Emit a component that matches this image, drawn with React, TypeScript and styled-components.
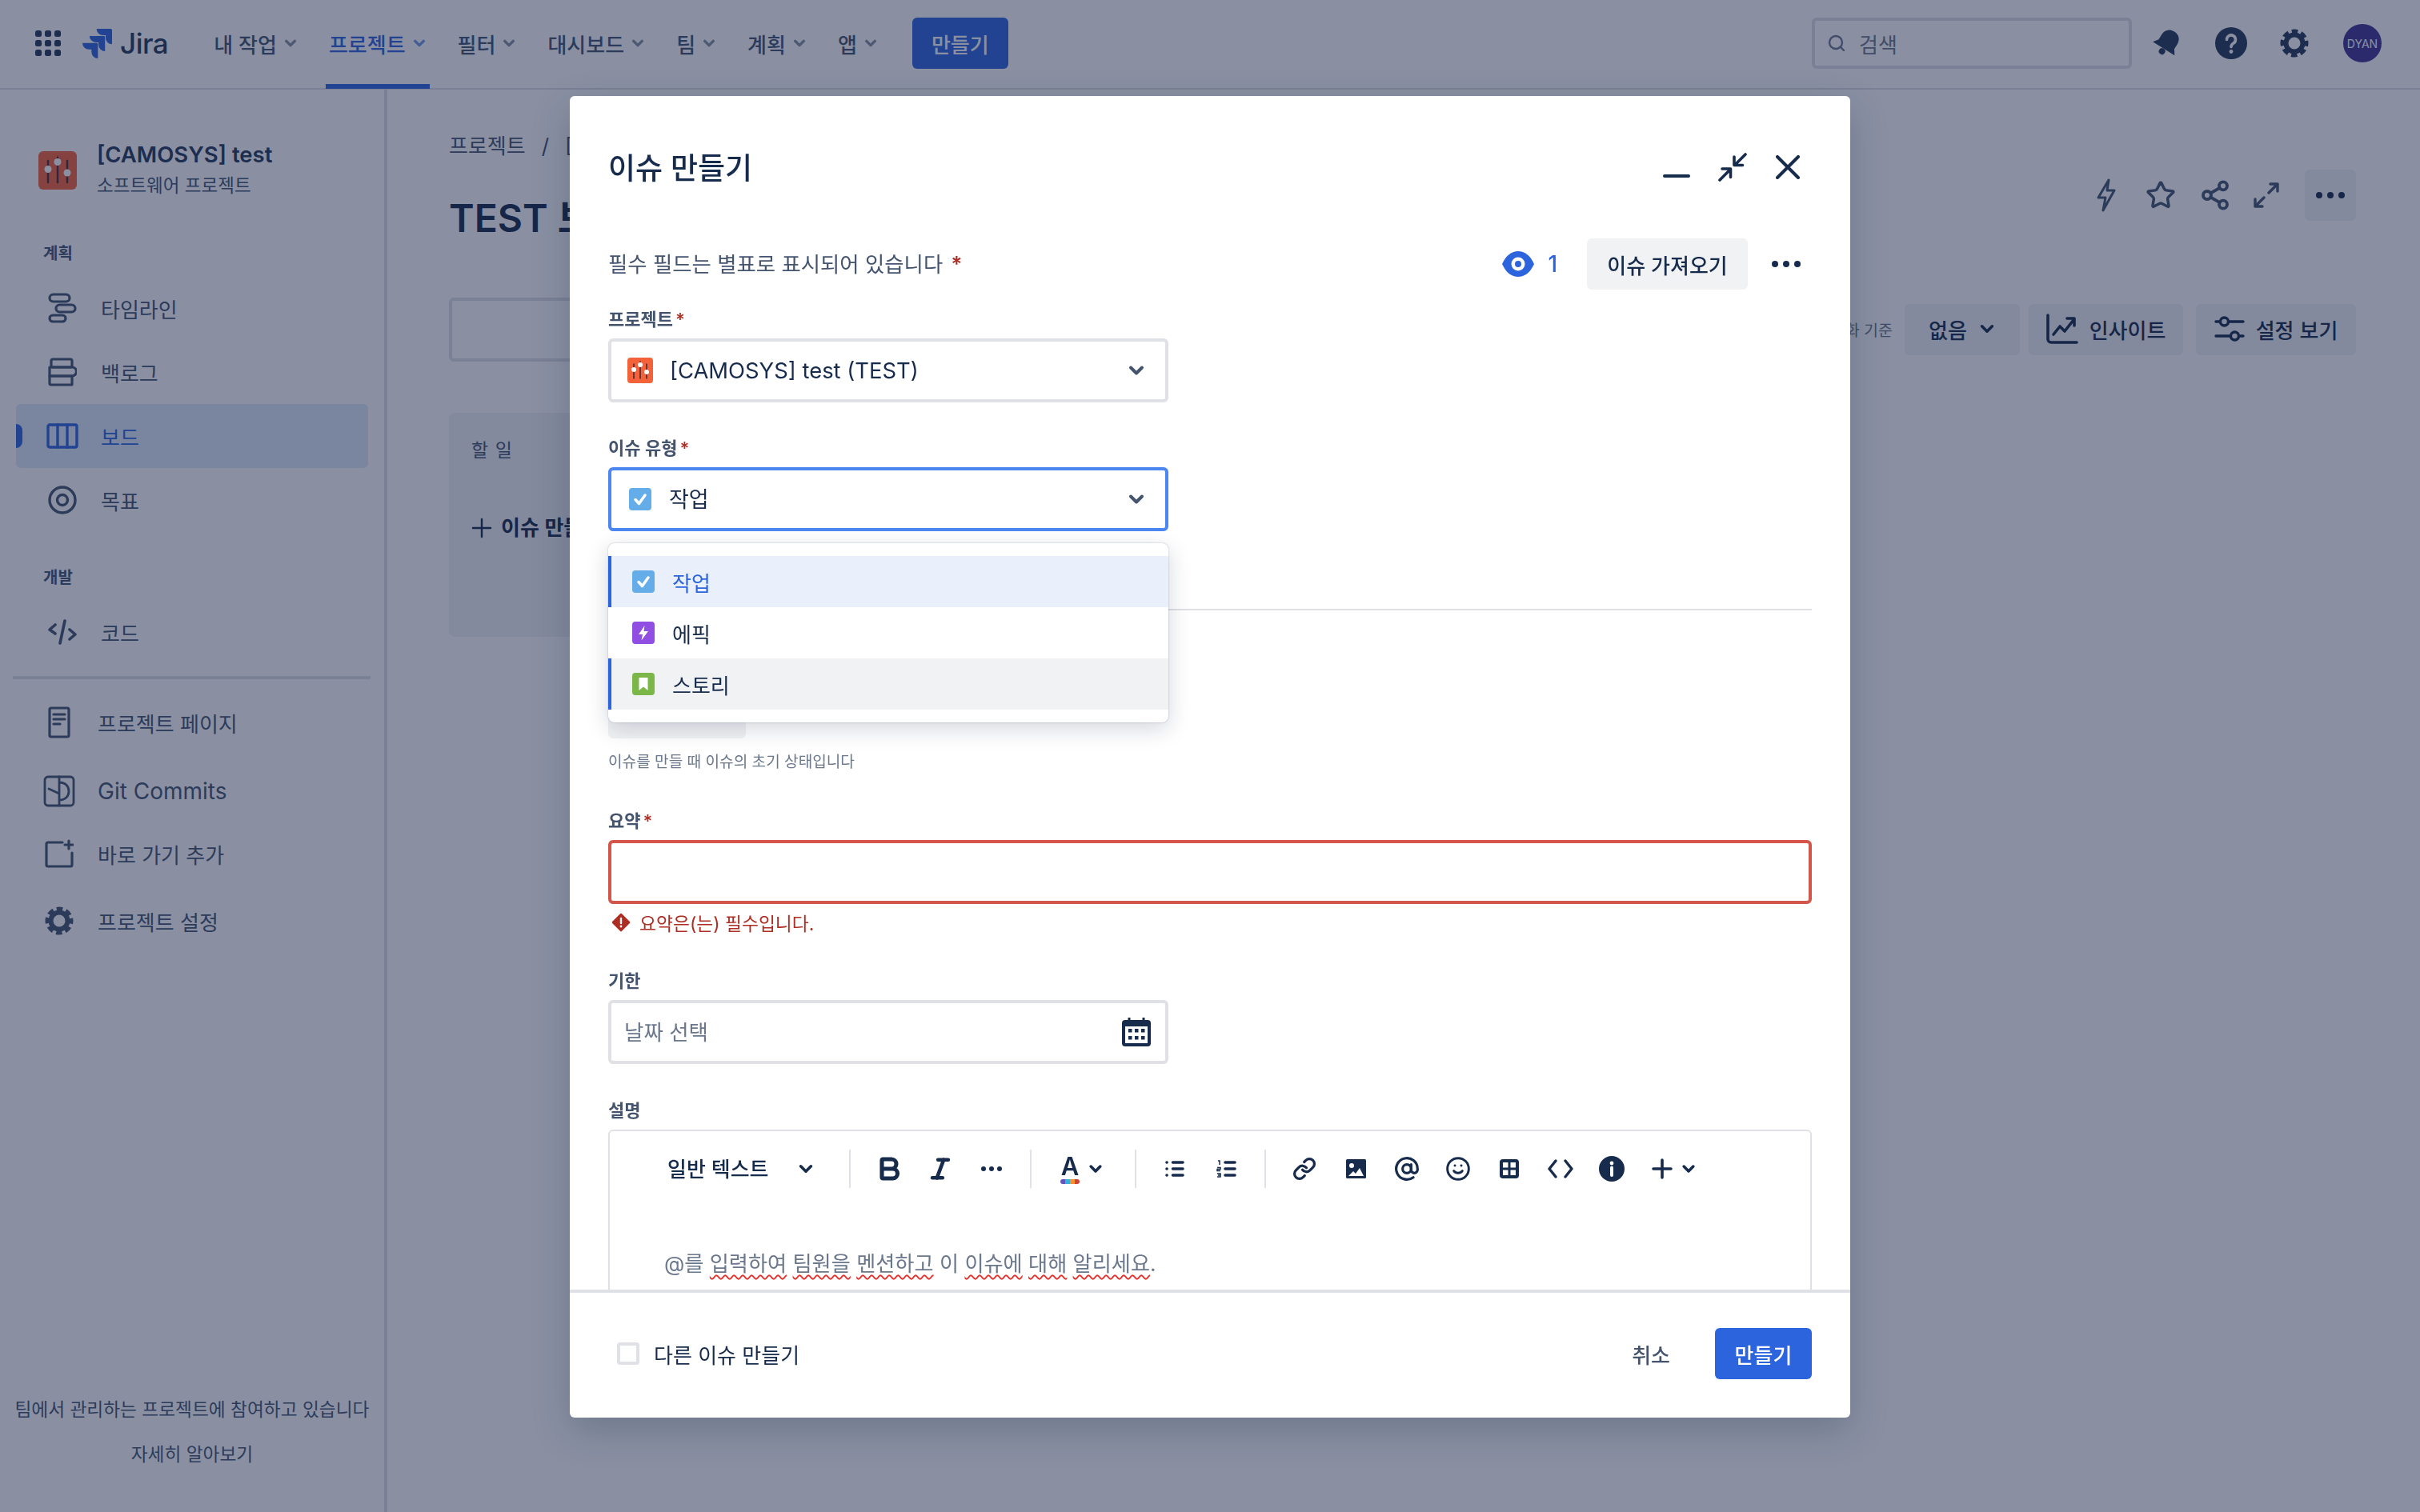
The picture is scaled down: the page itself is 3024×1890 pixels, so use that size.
import React from "react";
import styled, { createGlobalStyle } from "styled-components";
import { AtSign, Bold, Italic, Link, Search, Share2, Smile, Star } from "lucide-react";
import { SiJira } from "react-icons/si";

const Global = createGlobalStyle`
  html, body { margin: 0; padding: 0; background: #fff; }
  * { box-sizing: border-box; }
  body { font-family: Inter, "Noto Sans CJK KR", sans-serif; color: #172b4d; overflow: hidden; }
`;

const Page = styled.div`
  width: 3024px;
  height: 1890px;
  display: flex;
  flex-direction: column;
  overflow: hidden;
`;

/* top navigation */
const TopBar = styled.header`
  height: 112px;
  flex-shrink: 0;
  display: flex;
  align-items: center;
  padding: 0 48px 2px 44px;
  border-bottom: 2px solid #dfe1e6;
`;
const Logo = styled.div`
  display: flex;
  align-items: center;
  gap: 10px;
  margin-left: 27px;
  margin-right: 53px;
  color: #2c64de;
`;
const LogoText = styled.span`
  font-size: 35px;
  font-weight: 500;
  color: #253858;
  letter-spacing: -0.5px;
`;
const NavList = styled.nav`
  display: flex;
  gap: 31px;
  align-self: stretch;
`;
const NavItem = styled.div<{ $active?: boolean }>`
  display: flex;
  align-items: center;
  gap: 8px;
  padding: 3px 4px 0;
  margin-bottom: -3px;
  font-size: 26px;
  font-weight: 500;
  color: ${(p) => (p.$active ? "#2c64de" : "#44546f")};
  border-bottom: 6px solid ${(p) => (p.$active ? "#2c64de" : "transparent")};
`;
const NavChevron = styled.span`
  display: flex;
  opacity: 0.65;
`;
const PrimaryButton = styled.button`
  height: 64px;
  border: 0;
  border-radius: 6px;
  background: #2c64de;
  color: #fff;
  font: 500 26px Inter, "Noto Sans CJK KR", sans-serif;
`;
const TopCreate = styled(PrimaryButton)`
  width: 120px;
  margin-left: 39px;
`;
const TopRight = styled.div`
  margin-left: auto;
  display: flex;
  align-items: center;
`;
const SearchBox = styled.div`
  width: 400px;
  height: 64px;
  border: 4px solid #dfe1e6;
  border-radius: 6px;
  display: flex;
  align-items: center;
  gap: 16px;
  padding-left: 15px;
  font-size: 26px;
  color: #6b778c;
  margin-right: 25px;
`;
const TopIcon = styled.div<{ $w: number }>`
  width: ${(p) => p.$w}px;
  display: flex;
  color: #253858;
`;
const Avatar = styled.div`
  width: 48px;
  height: 48px;
  border-radius: 50%;
  background: #403294;
  color: #fff;
  font-size: 14px;
  display: flex;
  align-items: center;
  justify-content: center;
`;

/* underlying page */
const Body = styled.div`
  flex: 1;
  display: flex;
  min-height: 0;
`;
const Sidebar = styled.aside`
  width: 484px;
  flex-shrink: 0;
  border-right: 4px solid #dfe1e6;
  display: flex;
  flex-direction: column;
`;
const ProjectHead = styled.div`
  display: flex;
  align-items: center;
  gap: 25px;
  margin: 65px 0 0 48px;
`;
const ProjectName = styled.div`
  font-size: 27.5px;
  line-height: 32px;
  font-weight: 600;
  color: #253858;
`;
const ProjectKind = styled.div`
  font-size: 22.5px;
  line-height: 32px;
  margin-top: 7px;
  color: #44546f;
`;
const SectionLabel = styled.div<{ $top: number }>`
  font-size: 20px;
  line-height: 28px;
  font-weight: 600;
  color: #44546f;
  margin: ${(p) => p.$top}px 0 14px 54px;
`;
const SideItem = styled.div<{ $active?: boolean }>`
  position: relative;
  width: 440px;
  height: 80px;
  margin-left: 20px;
  padding-left: 38px;
  display: flex;
  align-items: center;
  gap: 28px;
  border-radius: 6px;
  font-size: 26px;
  color: ${(p) => (p.$active ? "#2c64de" : "#44546f")};
  background: ${(p) => (p.$active ? "#dfe9f9" : "transparent")};
  ${(p) =>
    p.$active &&
    `&::before { content: ""; position: absolute; left: 0; top: 25px; width: 8px; height: 30px; border-radius: 0 8px 8px 0; background: #2c64de; }`}
`;
const IconSlot = styled.span`
  width: 40px;
  display: flex;
  justify-content: center;
`;
const SideRule = styled.hr`
  width: 447px;
  height: 4px;
  margin: 15px 0 0 16px;
  border: 0;
  background: #dfe1e6;
`;
const ExtraRow = styled.div<{ $top: number }>`
  height: 60px;
  margin: ${(p) => p.$top}px 0 0 54px;
  display: flex;
  align-items: center;
  gap: 28px;
  font-size: 26px;
  color: #44546f;
`;
const GitLabel = styled.span`
  font-size: 28px;
`;
const SideFooter = styled.div`
  margin-top: auto;
  padding-bottom: 52px;
  text-align: center;
  font-size: 22.7px;
  line-height: 40px;
  color: #44546f;
  & > div + div {
    margin-top: 16px;
  }
`;
const Main = styled.main`
  flex: 1;
  min-width: 0;
  padding: 55px 80px 0 77px;
`;
const Crumbs = styled.div`
  display: flex;
  gap: 20px;
  font-size: 26px;
  line-height: 32px;
  color: #44546f;
`;
const TitleRow = styled.div`
  display: flex;
  justify-content: space-between;
  margin-top: 13px;
`;
const BoardTitle = styled.h1`
  margin: 33px 0 0;
  font-size: 48px;
  line-height: 56px;
  font-weight: 600;
  color: #172b4d;
`;
const Actions = styled.div`
  display: flex;
  gap: 4px;
  color: #44546f;
`;
const ActionCell = styled.div`
  width: 64px;
  height: 64px;
  display: flex;
  align-items: center;
  justify-content: center;
`;
const ExpandCell = styled(ActionCell)`
  margin-left: -4px;
`;
const ActionMore = styled(ActionCell)`
  margin-left: 12px;
  border-radius: 6px;
  background: #f1f2f4;
  color: #172b4d;
`;
const FilterRow = styled.div`
  display: flex;
  align-items: center;
  height: 80px;
  margin-top: 71px;
`;
const FilterInput = styled.div`
  width: 320px;
  height: 80px;
  border: 4px solid #dfe1e6;
  border-radius: 6px;
`;
const FilterRight = styled.div`
  margin-left: auto;
  display: flex;
  align-items: center;
  gap: 16px;
`;
const GroupLabel = styled.span`
  font-size: 19.5px;
  color: #6b778c;
  padding-bottom: 2px;
  margin-right: -1px;
`;
const GrayButton = styled.div<{ $w: number }>`
  width: ${(p) => p.$w}px;
  height: 64px;
  border-radius: 6px;
  background: #f1f2f4;
  display: flex;
  align-items: center;
  justify-content: center;
  gap: 14px;
  padding-bottom: 2px;
  font-size: 26px;
  font-weight: 500;
  color: #172b4d;
`;
const GroupButton = styled(GrayButton)`
  margin-right: -5px;
`;
const Column = styled.section`
  width: 540px;
  height: 280px;
  margin-top: 64px;
  padding: 31px 28px;
  border-radius: 8px;
  background: #f1f2f4;
`;
const ColumnTitle = styled.div`
  font-size: 23px;
  line-height: 32px;
  letter-spacing: 1px;
  color: #44546f;
`;
const ColumnAdd = styled.div`
  display: flex;
  align-items: center;
  gap: 11px;
  margin-top: 65px;
  font-size: 26px;
  line-height: 32px;
  font-weight: 600;
  color: #172b4d;
  white-space: nowrap;
`;

/* dialog */
const Backdrop = styled.div`
  position: fixed;
  inset: 0;
  padding: 120px 712px 118px;
  display: flex;
  background: rgba(21, 33, 69, 0.5);
`;
const Modal = styled.div`
  flex: 1;
  display: flex;
  flex-direction: column;
  border-radius: 6px;
  background: #fff;
  box-shadow: 0 16px 48px rgba(9, 30, 66, 0.22);
  overflow: hidden;
`;
const ModalBody = styled.div`
  flex: 1;
  min-height: 0;
  overflow: hidden;
  padding: 0 48px;
`;
const ModalHead = styled.div`
  height: 178px;
  display: flex;
  align-items: center;
`;
const ModalTitle = styled.h2`
  margin: 0 0 3px;
  font-size: 37px;
  font-weight: 500;
  color: #172b4d;
`;
const HeadTools = styled.div`
  margin-left: auto;
  margin-right: 15px;
  display: flex;
  align-items: center;
  color: #172b4d;
`;
const MinimizeSlot = styled.span`
  margin: 22px 35px 0 0;
`;
const CollapseSlot = styled.span`
  margin-right: 36px;
`;
const MetaRow = styled.div`
  height: 64px;
  display: flex;
  align-items: center;
`;
const MetaNote = styled.div`
  font-size: 26.4px;
  padding-bottom: 3px;
  color: #44546f;
`;
const Req = styled.span`
  color: #ae2e24;
  font-weight: 600;
`;
const NoteReq = styled(Req)`
  margin-left: 10px;
`;
const Watchers = styled.div`
  margin-left: auto;
  display: flex;
  align-items: center;
  gap: 17px;
  font-size: 28px;
  font-weight: 500;
  color: #2c64de;
`;
const ImportButton = styled.div`
  width: 201px;
  height: 64px;
  margin-left: 37px;
  border-radius: 6px;
  background: #f1f2f4;
  display: flex;
  align-items: center;
  justify-content: center;
  font-size: 26px;
  font-weight: 500;
  color: #172b4d;
`;
const MoreDots = styled.div`
  margin: 0 14px 0 30px;
  display: flex;
`;
const Field = styled.div<{ $top?: number }>`
  position: relative;
  margin-top: ${(p) => p.$top ?? 41}px;
`;
const Label = styled.label`
  display: block;
  height: 32px;
  margin-bottom: 8px;
  font-size: 22px;
  line-height: 32px;
  font-weight: 600;
  color: #44546f;
`;
const LabelReq = styled(Req)`
  margin-left: 3px;
`;
const Control = styled.div<{ $state?: "focus" | "error"; $wide?: boolean; $left?: number; $right?: number }>`
  width: ${(p) => (p.$wide ? "100%" : "700px")};
  height: 80px;
  border: 4px solid
    ${(p) => (p.$state === "focus" ? "#4c86f0" : p.$state === "error" ? "#d4564a" : "#dfe1e6")};
  border-radius: 6px;
  background: #fff;
  display: flex;
  align-items: center;
  gap: 22px;
  padding: 0 ${(p) => p.$right ?? 24}px 0 ${(p) => p.$left ?? 22}px;
  font-size: 27px;
  color: #172b4d;
`;
const ControlText = styled.span`
  flex: 1;
  padding-bottom: 3px;
`;
const DateText = styled.span`
  flex: 1;
  margin-left: -6px;
  padding-bottom: 3px;
  font-size: 26.5px;
  color: #6b778c;
`;
const ProjectValue = styled.span`
  flex: 1;
  margin-left: -1px;
  font-size: 27.4px;
`;
const ChevronWrap = styled.span`
  display: flex;
  color: #44546f;
`;
const Menu = styled.div`
  position: absolute;
  z-index: 2;
  top: 135px;
  left: 0;
  width: 700px;
  padding: 16px 0;
  border-radius: 8px;
  background: #fff;
  box-shadow: 0 8px 28px rgba(9, 30, 66, 0.18), 0 0 2px rgba(9, 30, 66, 0.3);
`;
const MenuItem = styled.div<{ $mark?: boolean; $tone?: "selected" | "hover" }>`
  height: 64px;
  display: flex;
  align-items: center;
  gap: 22px;
  padding-left: 26px;
  border-left: 4px solid ${(p) => (p.$mark ? "#2c64de" : "transparent")};
  font-size: 26px;
  color: ${(p) => (p.$tone === "selected" ? "#2c64de" : "#172b4d")};
  background: ${(p) =>
    p.$tone === "selected" ? "#e9f0fc" : p.$tone === "hover" ? "#f1f2f4" : "transparent"};
`;
const FormRule = styled.hr`
  height: 2px;
  margin: 97px 0 0;
  border: 0;
  background: #dfe1e6;
`;
const StatusButton = styled.div`
  width: 172px;
  height: 64px;
  border-radius: 6px;
  background: #f1f2f4;
`;
const Helper = styled.div`
  margin-top: 13px;
  font-size: 19.1px;
  line-height: 32px;
  color: #6b778c;
`;
const ErrorRow = styled.div`
  display: flex;
  align-items: center;
  gap: 11px;
  height: 32px;
  margin-top: 7px;
  padding-left: 4px;
  font-size: 22.8px;
  color: #ae2e24;
`;
const Editor = styled.div`
  height: 420px;
  border: 2px solid #dfe1e6;
  border-radius: 6px;
`;
const Toolbar = styled.div`
  height: 94px;
  display: flex;
  align-items: center;
  color: #172b4d;
`;
const StyleSelect = styled.div`
  width: 283px;
  display: flex;
  align-items: center;
  padding-left: 72px;
  font-size: 26px;
  font-weight: 500;
  & > span:first-child {
    width: 162px;
    padding-bottom: 3px;
  }
`;
const ToolSep = styled.span`
  width: 2px;
  height: 48px;
  margin: 0 16px;
  background: #dfe1e6;
`;
const Tool = styled.span`
  width: 64px;
  height: 48px;
  display: flex;
  align-items: center;
  justify-content: center;
`;
const ColorTool = styled.span`
  width: 97px;
  display: flex;
  align-items: center;
  gap: 10px;
  padding-left: 20px;
`;
const ColorLetter = styled.span`
  position: relative;
  width: 24px;
  font-size: 31px;
  line-height: 30px;
  font-weight: 600;
  text-align: center;
  padding-bottom: 6px;
  &::after {
    content: "";
    position: absolute;
    left: 0;
    right: 0;
    bottom: -1px;
    height: 6px;
    border-radius: 3px;
    background: linear-gradient(90deg, #6554c0 0 25%, #36b3d6 25% 50%, #f79232 50% 75%, #d04437 75%);
  }
`;
const PlusTool = styled.span`
  display: flex;
  align-items: center;
  gap: 10px;
  margin-left: 18px;
`;
const Placeholder = styled.div`
  padding: 54px 0 0 68px;
  font-size: 26.2px;
  line-height: 36px;
  color: #6b778c;
`;
const Misspelt = styled.span`
  text-decoration: underline wavy #e5322d 2px;
  text-underline-offset: 4px;
`;
const ModalFoot = styled.div`
  height: 160px;
  flex-shrink: 0;
  display: flex;
  align-items: center;
  border-top: 4px solid #dfe1e6;
  padding: 0 48px 4px 59px;
`;
const Check = styled.span`
  width: 28px;
  height: 28px;
  border: 4px solid #dfe1e6;
  border-radius: 4px;
`;
const CheckLabel = styled.span`
  margin-left: 18px;
  font-size: 26px;
  color: #172b4d;
`;
const CancelButton = styled.span`
  margin-left: auto;
  margin-right: 56px;
  font-size: 26px;
  font-weight: 500;
  color: #44546f;
`;
const SubmitButton = styled(PrimaryButton)`
  width: 121px;
`;

/* drawings */
const Svg = styled.svg`
  display: block;
  flex-shrink: 0;
  fill: none;
  stroke: currentColor;
  stroke-linecap: round;
  stroke-linejoin: round;
`;

const Chevron = ({ size = 24, weight = 4 }: { size?: number; weight?: number }) => (
  <Svg width={size} height={size} viewBox="0 0 24 24" strokeWidth={(weight * 24) / size}>
    <path d="M5 8.5l7 7 7-7" />
  </Svg>
);
const GridIcon = () => (
  <Svg width={32} height={32} viewBox="0 0 32 32" style={{ stroke: "none" }}>
    {[0, 12, 24].flatMap((y) =>
      [0, 12, 24].map((x) => <rect key={`${x}-${y}`} x={x} y={y} width={8} height={8} rx={2.5} fill="#253858" />)
    )}
  </Svg>
);
const Dots = ({ width = 36, r = 4 }: { width?: number; r?: number }) => (
  <Svg width={width} height={r * 2} viewBox={`0 0 ${width} ${r * 2}`} style={{ stroke: "none" }}>
    <circle cx={r} cy={r} r={r} fill="currentColor" />
    <circle cx={width / 2} cy={r} r={r} fill="currentColor" />
    <circle cx={width - r} cy={r} r={r} fill="currentColor" />
  </Svg>
);
const BellIcon = () => (
  <Svg width={38} height={38} viewBox="0 0 38 38" style={{ stroke: "none" }}>
    <g transform="rotate(32 19 19)" fill="currentColor">
      <path d="M19 2c-7.500 0-11.500 5-11.500 11.500v7L3 27h32l-4.500-6.500v-7C30.500 7 26.500 2 19 2z" />
      <circle cx={19} cy={31} r={4} />
    </g>
  </Svg>
);
const HelpIcon = () => (
  <Svg width={40} height={40} viewBox="0 0 40 40">
    <circle cx={20} cy={20} r={20} fill="currentColor" stroke="none" />
    <path d="M14.500 15.500a5.500 5.500 0 1 1 8.500 4.600c-2 1.300-3 2.400-3 4.400" stroke="#fff" strokeWidth={3.600} />
    <circle cx={20} cy={30.500} r={2.400} fill="#fff" stroke="none" />
  </Svg>
);
const GearIcon = ({ size = 36 }: { size?: number }) => (
  <Svg width={size} height={size} viewBox="0 0 36 36" style={{ strokeLinecap: "butt" }}>
    <circle cx={18} cy={18} r={10.500} strokeWidth={6} />
    <circle cx={18} cy={18} r={15} strokeWidth={5} strokeDasharray="7.500 4.280" strokeDashoffset={3.700} />
  </Svg>
);
const JiraProjectIcon = ({ size }: { size: number }) => (
  <Svg width={size} height={size} viewBox="0 0 32 32" style={{ stroke: "none" }}>
    <rect width={32} height={32} rx={4} fill="#f4623a" />
    <path d="M8 8v18M16 5v21M24 8v18" stroke="#4a2a38" strokeWidth={1.600} />
    <circle cx={8} cy={15} r={3} fill="#fff" />
    <circle cx={16} cy={9} r={3} fill="#fff" />
    <circle cx={24} cy={18} r={3} fill="#fff" />
  </Svg>
);
const TaskIcon = () => (
  <Svg width={28} height={28} viewBox="0 0 28 28">
    <rect width={28} height={28} rx={4} fill="#65ade8" stroke="none" />
    <path d="M8 14.500l4.500 5L20 9" stroke="#fff" strokeWidth={3.500} />
  </Svg>
);
const EpicIcon = () => (
  <Svg width={28} height={28} viewBox="0 0 28 28" style={{ stroke: "none" }}>
    <rect width={28} height={28} rx={4} fill="#904ee2" />
    <path d="M15.500 5L8 16h5l-1.500 7.500L20 12h-5.500z" fill="#fff" />
  </Svg>
);
const StoryIcon = () => (
  <Svg width={28} height={28} viewBox="0 0 28 28" style={{ stroke: "none" }}>
    <rect width={28} height={28} rx={4} fill="#7ab648" />
    <path d="M8.500 6h11v16L14 17.500 8.500 22z" fill="#fff" />
  </Svg>
);
const TimelineIcon = () => (
  <Svg width={36} height={38} viewBox="0 0 36 38" strokeWidth={3.200}>
    <rect x={2} y={2} width={25} height={9} rx={4.500} />
    <rect x={10} y={15} width={24} height={9} rx={4.500} />
    <rect x={2} y={28} width={20} height={8} rx={4} />
  </Svg>
);
const BacklogIcon = () => (
  <Svg width={36} height={36} viewBox="0 0 36 36" strokeWidth={3.200}>
    <rect x={4} y={2} width={26} height={10} rx={2} />
    <path d="M2 12h28a4 4 0 0 1 0 11H2z" />
    <path d="M2 23h28v11H4a2 2 0 0 1-2-2z" />
  </Svg>
);
const BoardIcon = () => (
  <Svg width={40} height={32} viewBox="0 0 40 32" strokeWidth={3.400}>
    <rect x={2} y={2} width={36} height={28} rx={2} />
    <path d="M14 2v28M26 2v28" />
  </Svg>
);
const GoalIcon = () => (
  <Svg width={36} height={36} viewBox="0 0 36 36" strokeWidth={3.400}>
    <circle cx={18} cy={18} r={16} />
    <circle cx={18} cy={18} r={6.500} />
  </Svg>
);
const CodeSideIcon = () => (
  <Svg width={36} height={32} viewBox="0 0 36 32" strokeWidth={3.600}>
    <path d="M9 7L2 13l7 5M27 13l7 6-7 6M21 2l-6 28" />
  </Svg>
);
const PageIcon = () => (
  <Svg width={28} height={40} viewBox="0 0 28 40" strokeWidth={3.200}>
    <rect x={2} y={2} width={24} height={36} rx={2} />
    <path d="M7 10h14M7 16h14M7 22h8" />
  </Svg>
);
const GitIcon = () => (
  <Svg width={40} height={40} viewBox="0 0 40 40" strokeWidth={2.800}>
    <rect x={2} y={2} width={36} height={36} rx={4} />
    <path d="M20 2v10M20 28v10M7 17l13 6M20 9c8 0 12 5 12 11s-4 11-12 11z" />
  </Svg>
);
const ShortcutIcon = () => (
  <Svg width={36} height={36} viewBox="0 0 36 36" strokeWidth={3.200}>
    <path d="M22 4H4a2 2 0 0 0-2 2v26a2 2 0 0 0 2 2h28a2 2 0 0 0 2-2V17" />
    <path d="M30 2v10M25 7h10" />
  </Svg>
);
const BoltOutline = () => (
  <Svg width={24} height={42} viewBox="0 0 24 42" strokeWidth={3}>
    <path d="M15 2L2 24h9L8 40l14-25h-9z" />
  </Svg>
);
const ExpandIcon = () => (
  <Svg width={34} height={34} viewBox="0 0 34 34" strokeWidth={3.400}>
    <path d="M31 3L20 14M22 3h9v9M3 31l11-11M3 22v9h9" />
  </Svg>
);
const CollapseIcon = () => (
  <Svg width={36} height={36} viewBox="0 0 36 36" strokeWidth={3.600}>
    <path d="M34 2L22 14M20 5v10.500h10.500M2 34l12-12M5 20h10.500v10.500" />
  </Svg>
);
const MinimizeIcon = () => (
  <Svg width={34} height={6} viewBox="0 0 34 6" strokeWidth={4}>
    <path d="M2 3h30" />
  </Svg>
);
const CloseIcon = () => (
  <Svg width={30} height={30} viewBox="0 0 30 30" strokeWidth={4}>
    <path d="M2 2l26 26M28 2L2 28" />
  </Svg>
);
const EyeIcon = () => (
  <Svg width={40} height={32} viewBox="0 0 40 32" style={{ stroke: "none" }}>
    <path d="M0 16C5 5 12 0 20 0s15 5 20 16c-5 11-12 16-20 16S5 27 0 16z" fill="#2c64de" />
    <circle cx={20} cy={16} r={8.500} fill="#fff" />
    <circle cx={20} cy={16} r={4} fill="#2c64de" />
  </Svg>
);
const InsightIcon = () => (
  <Svg width={40} height={38} viewBox="0 0 40 38" strokeWidth={3.600}>
    <path d="M2 2v30a4 4 0 0 0 4 4h32M9 26l8-10 6 6 11-14M26 6h9v9" />
  </Svg>
);
const SlidersIcon = () => (
  <Svg width={38} height={32} viewBox="0 0 38 32" strokeWidth={3.400}>
    <path d="M2 7h5M18 7h18M2 25h18M31 25h5" />
    <circle cx={12.500} cy={7} r={5} />
    <circle cx={25.500} cy={25} r={5} />
  </Svg>
);
const CalendarIcon = () => (
  <Svg width={36} height={36} viewBox="0 0 36 36" style={{ stroke: "none", marginRight: -6 }}>
    <path d="M9 0v5M27 0v5" stroke="#172b4d" strokeWidth={3} />
    <rect y={3} width={36} height={33} rx={4} fill="#172b4d" />
    <rect x={4} y={11} width={28} height={21} fill="#fff" />
    {[8, 16, 24].flatMap((x) =>
      [14, 23].map((y) => <rect key={`${x}-${y}`} x={x} y={y} width={4.500} height={4.500} fill="#172b4d" />)
    )}
  </Svg>
);
const ErrorIcon = () => (
  <Svg width={24} height={24} viewBox="0 0 24 24">
    <path d="M12 2l10 10-10 10L2 12z" fill="#ae2e24" stroke="#ae2e24" strokeWidth={2.500} />
    <path d="M12 7v6" stroke="#fff" strokeWidth={2.400} />
    <circle cx={12} cy={17} r={1.400} fill="#fff" stroke="none" />
  </Svg>
);
const BulletIcon = () => (
  <Svg width={24} height={22} viewBox="0 0 24 22" strokeWidth={3.600}>
    <path d="M9.500 3H22M9.500 11H22M9.500 19H22" />
    <path d="M2 3h.1M2 11h.1M2 19h.1" />
  </Svg>
);
const NumberIcon = () => (
  <Svg width={25} height={24} viewBox="0 0 25 24">
    <path d="M11 4h12M11 12h12M11 20h12" strokeWidth={3.600} />
    <path d="M2 2h2v5M1 10.500h4v2H1v2h4M1 18h4v2H2M1 22h4v-2" strokeWidth={1.500} style={{ strokeLinecap: "butt", strokeLinejoin: "miter" }} />
  </Svg>
);
const ImageIcon = () => (
  <Svg width={25} height={24} viewBox="0 0 25 24" style={{ stroke: "none" }}>
    <rect width={25} height={24} rx={1.500} fill="#172b4d" />
    <circle cx={7} cy={8} r={3} fill="#fff" />
    <path d="M3 21l6-6 3 3 5-7 5 10z" fill="#fff" />
  </Svg>
);
const TableIcon = () => (
  <Svg width={24} height={24} viewBox="0 0 24 24" style={{ stroke: "none" }}>
    <rect width={24} height={24} rx={4} fill="#172b4d" />
    <rect x={4} y={4} width={6.500} height={6.500} fill="#fff" />
    <rect x={13.500} y={4} width={6.500} height={6.500} fill="#fff" />
    <rect x={4} y={13.500} width={6.500} height={6.500} fill="#fff" />
    <rect x={13.500} y={13.500} width={6.500} height={6.500} fill="#fff" />
  </Svg>
);
const CodeIcon = () => (
  <Svg width={32} height={26} viewBox="0 0 32 26" strokeWidth={3.400}>
    <path d="M10 3L2 13l8 10M22 3l8 10-8 10" />
  </Svg>
);
const InfoIcon = () => (
  <Svg width={32} height={32} viewBox="0 0 32 32">
    <circle cx={16} cy={16} r={16} fill="#172b4d" stroke="none" />
    <path d="M16 14.500V24" stroke="#fff" strokeWidth={4} />
    <circle cx={16} cy={9} r={2.400} fill="#fff" stroke="none" />
  </Svg>
);
const PlusIcon = ({ size, weight }: { size: number; weight: number }) => (
  <Svg width={size} height={size} viewBox={`0 0 ${size} ${size}`} strokeWidth={weight}>
    <path d={`M${size / 2} 2v${size - 4}M2 ${size / 2}h${size - 4}`} />
  </Svg>
);

const navLinks = ["내 작업", "프로젝트", "필터", "대시보드", "팀", "계획", "앱"];

export default function App() {
  return (
    <Page>
      <Global />
      <TopBar>
        <GridIcon />
        <Logo>
          <SiJira size={37} />
          <LogoText>Jira</LogoText>
        </Logo>
        <NavList>
          {navLinks.map((label) => (
            <NavItem key={label} $active={label === "프로젝트"}>
              {label}
              <NavChevron>
                <Chevron size={18} weight={3.500} />
              </NavChevron>
            </NavItem>
          ))}
        </NavList>
        <TopCreate>만들기</TopCreate>
        <TopRight>
          <SearchBox>
            <Search size={24} strokeWidth={2.400} />
            검색
          </SearchBox>
          <TopIcon $w={79}>
            <BellIcon />
          </TopIcon>
          <TopIcon $w={81}>
            <HelpIcon />
          </TopIcon>
          <TopIcon $w={79}>
            <GearIcon />
          </TopIcon>
          <Avatar>DYAN</Avatar>
        </TopRight>
      </TopBar>

      <Body>
        <Sidebar>
          <ProjectHead>
            <JiraProjectIcon size={48} />
            <div>
              <ProjectName>[CAMOSYS] test</ProjectName>
              <ProjectKind>소프트웨어 프로젝트</ProjectKind>
            </div>
          </ProjectHead>
          <SectionLabel $top={55}>계획</SectionLabel>
          <SideItem>
            <IconSlot>
              <TimelineIcon />
            </IconSlot>
            타임라인
          </SideItem>
          <SideItem>
            <IconSlot>
              <BacklogIcon />
            </IconSlot>
            백로그
          </SideItem>
          <SideItem $active>
            <IconSlot>
              <BoardIcon />
            </IconSlot>
            보드
          </SideItem>
          <SideItem>
            <IconSlot>
              <GoalIcon />
            </IconSlot>
            목표
          </SideItem>
          <SectionLabel $top={43}>개발</SectionLabel>
          <SideItem>
            <IconSlot>
              <CodeSideIcon />
            </IconSlot>
            코드
          </SideItem>
          <SideRule />
          <ExtraRow $top={24}>
            <IconSlot>
              <PageIcon />
            </IconSlot>
            프로젝트 페이지
          </ExtraRow>
          <ExtraRow $top={26}>
            <IconSlot>
              <GitIcon />
            </IconSlot>
            <GitLabel>Git Commits</GitLabel>
          </ExtraRow>
          <ExtraRow $top={18}>
            <IconSlot>
              <ShortcutIcon />
            </IconSlot>
            바로 가기 추가
          </ExtraRow>
          <ExtraRow $top={24}>
            <IconSlot>
              <GearIcon />
            </IconSlot>
            프로젝트 설정
          </ExtraRow>
          <SideFooter>
            <div>팀에서 관리하는 프로젝트에 참여하고 있습니다</div>
            <div>자세히 알아보기</div>
          </SideFooter>
        </Sidebar>

        <Main>
          <Crumbs>
            <span>프로젝트</span>
            <span>/</span>
            <span>[CAMOSYS] test</span>
          </Crumbs>
          <TitleRow>
            <BoardTitle>TEST 보드</BoardTitle>
            <Actions>
              <ActionCell>
                <BoltOutline />
              </ActionCell>
              <ActionCell>
                <Star size={38} strokeWidth={2.200} />
              </ActionCell>
              <ActionCell>
                <Share2 size={40} strokeWidth={2.300} />
              </ActionCell>
              <ExpandCell>
                <ExpandIcon />
              </ExpandCell>
              <ActionMore>
                <Dots />
              </ActionMore>
            </Actions>
          </TitleRow>
          <FilterRow>
            <FilterInput />
            <FilterRight>
              <GroupLabel>그룹화 기준</GroupLabel>
              <GroupButton $w={144}>
                없음
                <Chevron size={22} weight={3.600} />
              </GroupButton>
              <GrayButton $w={193}>
                <InsightIcon />
                인사이트
              </GrayButton>
              <GrayButton $w={200}>
                <SlidersIcon />
                설정 보기
              </GrayButton>
            </FilterRight>
          </FilterRow>
          <Column>
            <ColumnTitle>할 일</ColumnTitle>
            <ColumnAdd>
              <PlusIcon size={26} weight={2.400} />
              이슈 만들기
            </ColumnAdd>
          </Column>
        </Main>
      </Body>

      <Backdrop>
        <Modal>
          <ModalBody>
            <ModalHead>
              <ModalTitle>이슈 만들기</ModalTitle>
              <HeadTools>
                <MinimizeSlot>
                  <MinimizeIcon />
                </MinimizeSlot>
                <CollapseSlot>
                  <CollapseIcon />
                </CollapseSlot>
                <CloseIcon />
              </HeadTools>
            </ModalHead>
            <MetaRow>
              <MetaNote>
                필수 필드는 별표로 표시되어 있습니다
                <NoteReq>*</NoteReq>
              </MetaNote>
              <Watchers>
                <EyeIcon />1
              </Watchers>
              <ImportButton>이슈 가져오기</ImportButton>
              <MoreDots>
                <Dots />
              </MoreDots>
            </MetaRow>

            <Field $top={21}>
              <Label>
                프로젝트<LabelReq>*</LabelReq>
              </Label>
              <Control $left={20}>
                <JiraProjectIcon size={32} />
                <ProjectValue>[CAMOSYS] test (TEST)</ProjectValue>
                <ChevronWrap>
                  <Chevron />
                </ChevronWrap>
              </Control>
            </Field>

            <Field>
              <Label>
                이슈 유형<LabelReq>*</LabelReq>
              </Label>
              <Control $state="focus">
                <TaskIcon />
                <ControlText>작업</ControlText>
                <ChevronWrap>
                  <Chevron />
                </ChevronWrap>
              </Control>
              <Menu>
                <MenuItem $mark $tone="selected">
                  <TaskIcon />
                  작업
                </MenuItem>
                <MenuItem>
                  <EpicIcon />
                  에픽
                </MenuItem>
                <MenuItem $mark $tone="hover">
                  <StoryIcon />
                  스토리
                </MenuItem>
              </Menu>
            </Field>

            <FormRule />

            <Field $top={56}>
              <Label>상태</Label>
              <StatusButton />
              <Helper>이슈를 만들 때 이슈의 초기 상태입니다</Helper>
            </Field>

            <Field $top={42}>
              <Label>
                요약<LabelReq>*</LabelReq>
              </Label>
              <Control $state="error" $wide />
              <ErrorRow>
                <ErrorIcon />
                요약은(는) 필수입니다.
              </ErrorRow>
            </Field>

            <Field>
              <Label>기한</Label>
              <Control>
                <DateText>날짜 선택</DateText>
                <CalendarIcon />
              </Control>
            </Field>

            <Field $top={42}>
              <Label>설명</Label>
              <Editor>
                <Toolbar>
                  <StyleSelect>
                    <span>일반 텍스트</span>
                    <Chevron size={22} weight={3.600} />
                  </StyleSelect>
                  <ToolSep />
                  <Tool>
                    <Bold size={36} strokeWidth={3.400} />
                  </Tool>
                  <Tool>
                    <Italic size={34} strokeWidth={3.200} />
                  </Tool>
                  <Tool>
                    <Dots width={26} r={3} />
                  </Tool>
                  <ToolSep />
                  <ColorTool>
                    <ColorLetter>A</ColorLetter>
                    <Chevron size={20} weight={3.600} />
                  </ColorTool>
                  <ToolSep />
                  <Tool>
                    <BulletIcon />
                  </Tool>
                  <Tool>
                    <NumberIcon />
                  </Tool>
                  <ToolSep />
                  <Tool>
                    <Link size={30} strokeWidth={2.600} />
                  </Tool>
                  <Tool>
                    <ImageIcon />
                  </Tool>
                  <Tool>
                    <AtSign size={32} strokeWidth={2.400} />
                  </Tool>
                  <Tool>
                    <Smile size={32} strokeWidth={2.200} />
                  </Tool>
                  <Tool>
                    <TableIcon />
                  </Tool>
                  <Tool>
                    <CodeIcon />
                  </Tool>
                  <Tool>
                    <InfoIcon />
                  </Tool>
                  <PlusTool>
                    <PlusIcon size={26} weight={3.600} />
                    <Chevron size={20} weight={3.600} />
                  </PlusTool>
                </Toolbar>
                <Placeholder>
                  @를 <Misspelt>입력하여</Misspelt> <Misspelt>팀원을</Misspelt> <Misspelt>멘션하고</Misspelt> 이{" "}
                  <Misspelt>이슈에</Misspelt> <Misspelt>대해</Misspelt> <Misspelt>알리세요</Misspelt>.
                </Placeholder>
              </Editor>
            </Field>
          </ModalBody>
          <ModalFoot>
            <Check />
            <CheckLabel>다른 이슈 만들기</CheckLabel>
            <CancelButton>취소</CancelButton>
            <SubmitButton>만들기</SubmitButton>
          </ModalFoot>
        </Modal>
      </Backdrop>
    </Page>
  );
}
